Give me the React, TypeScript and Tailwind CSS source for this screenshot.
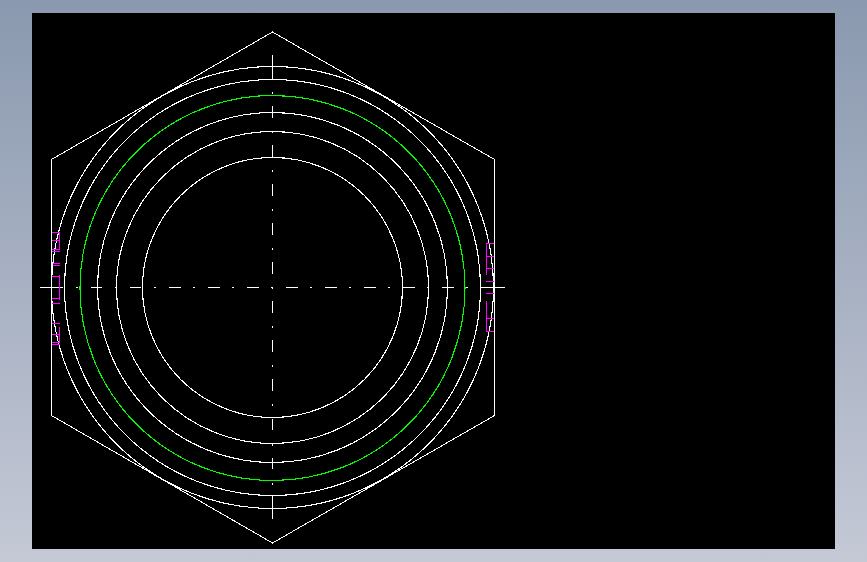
const cx = 272.5
const cy = 287.5

// centre line pieces, [from, to]
const hDashes = [[40, 63], [91, 102], [130, 141], [169, 181], [208, 220], [247, 259], [286, 298], [325, 337], [364, 376], [403, 415], [442, 454], [481, 505]]
const hDots = [76, 115, 154, 193, 232, 271, 310, 349, 388, 427, 466]
const vDashes = [[55, 80], [106, 118], [145, 157], [184, 196], [223, 235], [262, 274], [301, 313], [340, 352], [379, 391], [419, 430], [458, 469], [496, 519]]
const vDots = [92, 131, 170, 209, 248, 287, 326, 365, 404, 444, 483]

const circles = [130, 156, 175, 208, 221]

// magenta marks on the two flats, [x1, y1, x2, y2]
const marks = [
  [52, 232.5, 60, 232.5], [52, 240.5, 60, 240.5], [52, 249.5, 60, 249.5], [52, 251.5, 60, 251.5], [59.5, 233, 59.5, 249],
  [53, 263.5, 60, 263.5], [53, 265.5, 60, 265.5],
  [52, 276.5, 60, 276.5], [52, 298.5, 60, 298.5], [52, 303.5, 60, 303.5], [59.5, 275, 59.5, 300],
  [52, 323.5, 60, 323.5], [52, 334.5, 60, 334.5], [52, 342.5, 60, 342.5], [52, 344.5, 60, 344.5], [59.5, 327, 59.5, 343],
  [486, 243.5, 494, 243.5], [486, 256.5, 494, 256.5], [486, 268.5, 494, 268.5], [486.5, 243, 486.5, 275],
  [486, 281.5, 494, 281.5], [486, 293.5, 494, 293.5],
  [486, 318.5, 494, 318.5], [486, 331.5, 494, 331.5], [486.5, 301, 486.5, 332],
]

function Drawing() {
  return (
    <svg viewBox="32 13 803 536" className="block w-full h-full" shapeRendering="crispEdges" fill="none" stroke="#ffffff">
      <polygon points="272.5,32 494.5,159.5 494.5,415.5 272.5,543 51.5,415.5 51.5,159.5" />
      {circles.map((r) => (
        <circle key={r} cx={cx} cy={cy} r={r} strokeWidth={1.1} />
      ))}
      <circle cx={cx} cy={288} r={192.5} stroke="#00ff00" strokeWidth={1.1} />
      {hDashes.map(([a, b]) => (
        <line key={a} x1={a} x2={b} y1={cy} y2={cy} />
      ))}
      {hDots.map((x) => (
        <line key={x} x1={x} x2={x + 2} y1={cy} y2={cy} />
      ))}
      {vDashes.map(([a, b]) => (
        <line key={a} x1={cx} x2={cx} y1={a} y2={b} />
      ))}
      {vDots.map((y) => (
        <line key={y} x1={cx} x2={cx} y1={y} y2={y + 2} />
      ))}
      {marks.map(([x1, y1, x2, y2], i) => (
        <line key={i} x1={x1} y1={y1} x2={x2} y2={y2} stroke="#ff00ff" />
      ))}
    </svg>
  )
}

export default function App() {
  return (
    <div className="h-screen px-8 py-[13px] bg-gradient-to-b from-[#8a99af] to-[#c5c9d6]">
      <div className="h-full bg-black">
        <Drawing />
      </div>
    </div>
  )
}
